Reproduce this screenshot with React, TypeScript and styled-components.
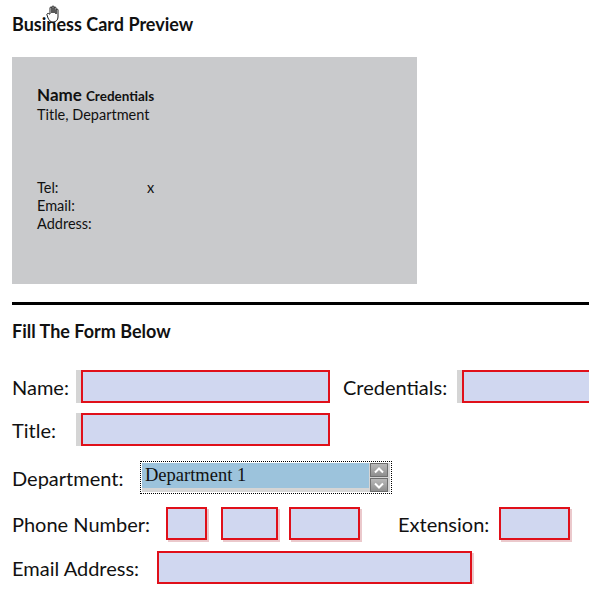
import styled, { createGlobalStyle } from "styled-components";

const GlobalStyle = createGlobalStyle`
  html, body {
    margin: 0;
    padding: 0;
    background: #ffffff;
    overflow: hidden;
  }
  body {
    font-family: "Lato", "Liberation Sans", sans-serif;
    color: #111111;
  }
`;

const Page = styled.div`
  position: relative;
  display: flex;
  flex-direction: column;
  padding: 13px 0 0 12px;
  width: 577px;
`;

const Cursor = styled.svg`
  position: absolute;
  left: 45px;
  top: 5px;
`;

const Heading = styled.div`
  font-size: 18px;
  font-weight: 700;
  line-height: 22px;
`;

const Card = styled.div`
  display: flex;
  flex-direction: column;
  width: 380px;
  height: 199px;
  margin-top: 22px;
  padding: 28px 0 0 25px;
  background: #c9cacc;
  font-size: 14.5px;
  line-height: 18px;
`;

const CardName = styled.div`
  font-size: 17px;
  font-weight: 700;
  line-height: 20px;
`;

const CardCred = styled.span`
  font-size: 13.5px;
  font-weight: 700;
`;

const ContactBlock = styled.div`
  display: flex;
  flex-direction: column;
  margin-top: 55px;
`;

const TelKey = styled.span`
  display: inline-block;
  width: 110px;
`;

const Rule = styled.hr`
  width: 100%;
  height: 3px;
  margin: 18px 0 15px;
  border: none;
  background: #000000;
`;

const Form = styled.div`
  display: flex;
  flex-direction: column;
  margin-top: 28px;
`;

const Row = styled.div<{ $mt: number }>`
  display: flex;
  align-items: center;
  height: 33px;
  margin-top: ${(p) => p.$mt}px;
  font-size: 20px;
`;

const Label = styled.label<{ $w: number }>`
  flex: none;
  width: ${(p) => p.$w}px;
  white-space: nowrap;
`;

const Input = styled.div<{ $w: number; $gap?: number; $shade?: "left" | "right" }>`
  flex: none;
  box-sizing: border-box;
  width: ${(p) => p.$w}px;
  height: 33px;
  margin-right: ${(p) => p.$gap ?? 0}px;
  border: 2px solid #e0101a;
  background: #d0d7f0;
  box-shadow: ${(p) =>
    p.$shade === "left"
      ? "-5px 0 0 #d5d5d5"
      : p.$shade === "right"
      ? "2px 2px 0 #ebc9cc"
      : "none"};
`;

const Select = styled.div`
  flex: none;
  box-sizing: border-box;
  width: 252px;
  height: 33px;
  border: 1px dotted #000000;
  padding: 1px;
`;

const SelectInner = styled.div`
  display: flex;
  height: 100%;
  background: #d5d5d5;
`;

const Option = styled.div`
  flex: 1;
  height: 25px;
  padding-left: 3px;
  background: #9cc3dc;
  font-family: "Liberation Serif", "DejaVu Serif", serif;
  font-size: 18.5px;
  line-height: 24px;
  color: #111111;
`;

const Spinner = styled.div`
  display: flex;
  flex-direction: column;
  gap: 1px;
  width: 18px;
  margin: 0 2px 0 1px;
`;

const SpinButton = styled.div`
  display: flex;
  align-items: center;
  justify-content: center;
  box-sizing: border-box;
  height: 14px;
  border: 1px solid #6f6f6f;
  background: linear-gradient(#b9b9b9, #8e8e8e);
`;

function Chevron({ up }: { up?: boolean }) {
  return (
    <svg width="10" height="7" viewBox="0 0 10 7">
      <path
        d={up ? "M1 5.5 L5 1.5 L9 5.5" : "M1 1.5 L5 5.5 L9 1.5"}
        fill="none"
        stroke="#ffffff"
        strokeWidth="2"
      />
    </svg>
  );
}

function HandCursor() {
  return (
    <Cursor width="16" height="18" viewBox="0 0 16 18">
      <path
        d="M5 9 V3 a1 1 0 0 1 2 0 V8 V2 a1 1 0 0 1 2 0 V8 V3 a1 1 0 0 1 2 0 V9 V5 a1 1 0 0 1 2 0 V12 c0 3 -2 5 -5 5 c-3 0 -4 -2 -5 -4 L2 10 a1 1 0 0 1 2 -1 Z"
        fill="#ffffff"
        stroke="#222222"
        strokeWidth="1"
        strokeLinejoin="round"
      />
    </Cursor>
  );
}

export default function App() {
  return (
    <Page>
      <GlobalStyle />
      <HandCursor />
      <Heading>Business Card Preview</Heading>
      <Card>
        <CardName>
          Name <CardCred>Credentials</CardCred>
        </CardName>
        <div>Title, Department</div>
        <ContactBlock>
          <div>
            <TelKey>Tel:</TelKey>x
          </div>
          <div>Email:</div>
          <div>Address:</div>
        </ContactBlock>
      </Card>
      <Rule />
      <Heading>Fill The Form Below</Heading>
      <Form>
        <Row $mt={0}>
          <Label $w={69}>Name:</Label>
          <Input $w={249} $gap={13} $shade="left" />
          <Label $w={119}>Credentials:</Label>
          <Input $w={160} $shade="left" />
        </Row>
        <Row $mt={10}>
          <Label $w={69}>Title:</Label>
          <Input $w={249} $shade="left" />
        </Row>
        <Row $mt={15}>
          <Label $w={128}>Department:</Label>
          <Select>
            <SelectInner>
              <Option>Department 1</Option>
              <Spinner>
                <SpinButton>
                  <Chevron up />
                </SpinButton>
                <SpinButton>
                  <Chevron />
                </SpinButton>
              </Spinner>
            </SelectInner>
          </Select>
        </Row>
        <Row $mt={13}>
          <Label $w={154}>Phone Number:</Label>
          <Input $w={41} $gap={14} $shade="right" />
          <Input $w={57} $gap={11} $shade="right" />
          <Input $w={71} $gap={38} $shade="right" />
          <Label $w={101}>Extension:</Label>
          <Input $w={71} $shade="right" />
        </Row>
        <Row $mt={11}>
          <Label $w={145}>Email Address:</Label>
          <Input $w={315} $shade="right" />
        </Row>
      </Form>
    </Page>
  );
}
